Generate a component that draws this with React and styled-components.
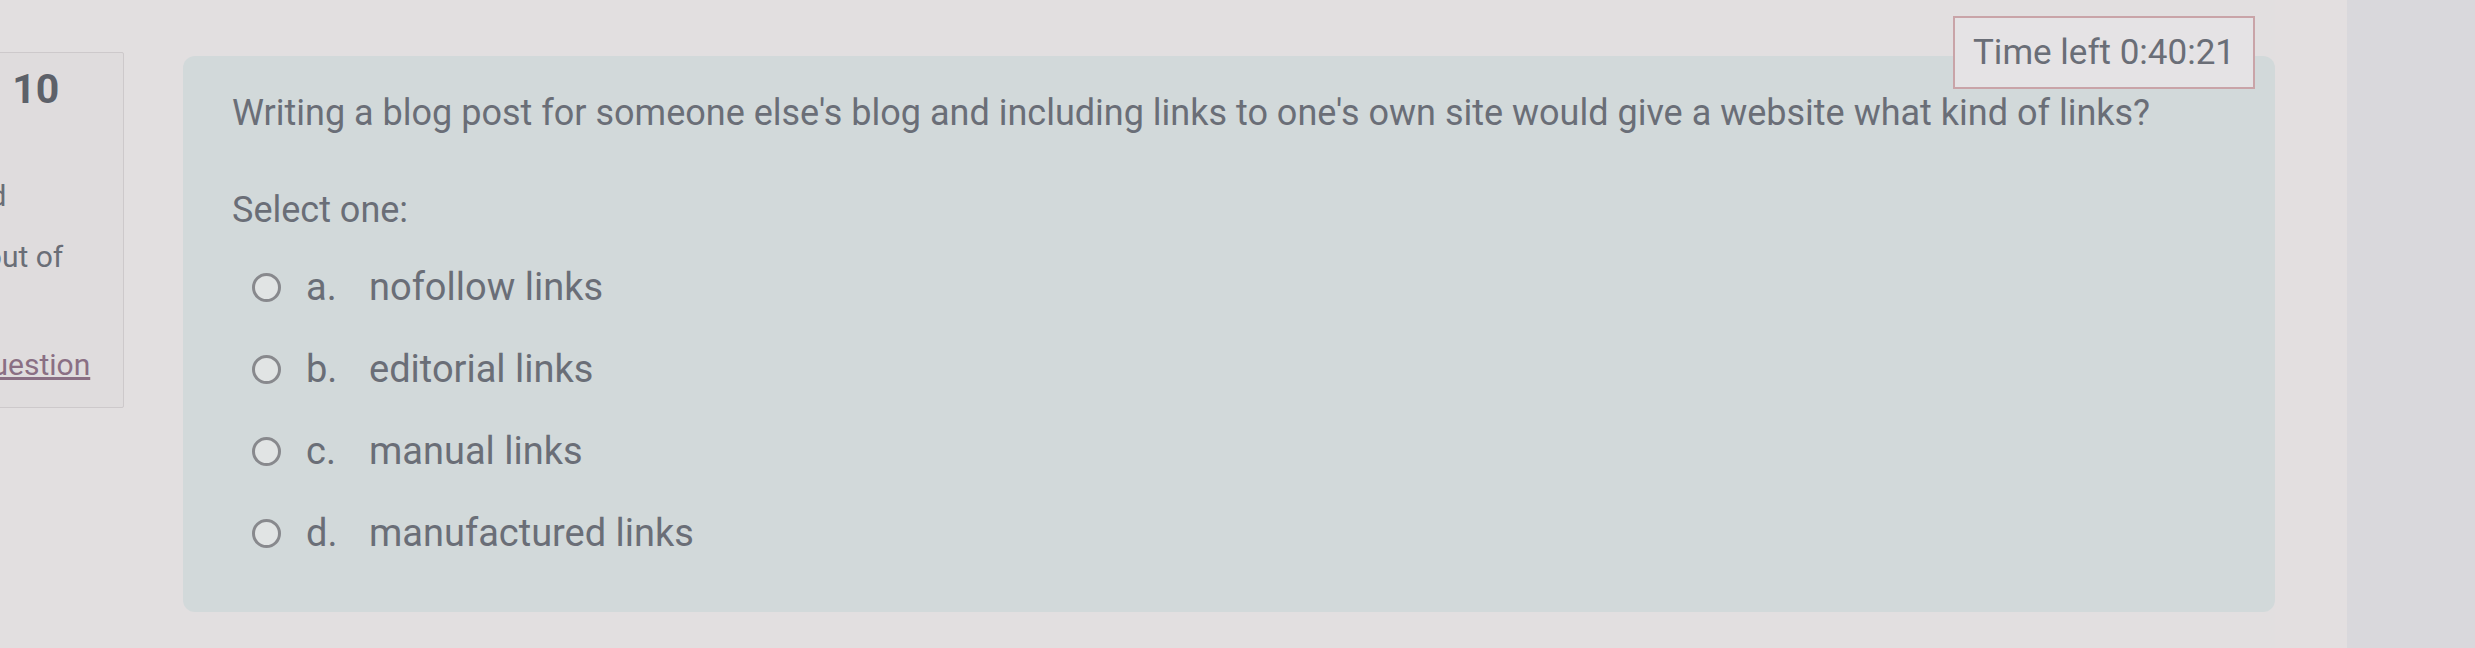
import React from "react";
import styled, { createGlobalStyle } from "styled-components";

const GlobalStyle = createGlobalStyle`
  html, body {
    margin: 0;
    padding: 0;
    overflow: hidden;
    background: #e2dfe0;
    font-family: Roboto, "Liberation Sans", sans-serif;
  }
`;

const Page = styled.div`
  position: relative;
  display: flex;
  width: 2475px;
  height: 648px;
  overflow: hidden;
  background: #e2dfe0;
  color: #6a6e77;
`;

const LeftCol = styled.div`
  width: 183px;
  flex-shrink: 0;
`;

const InfoBox = styled.div`
  box-sizing: border-box;
  margin-left: -134px;
  margin-top: 52px;
  width: 258px;
  height: 356px;
  padding: 12px 48px 0 10px;
  border: 1px solid #cdc9cb;
  border-radius: 2px;
  background: #dfdcdd;
  font-size: 30px;
  line-height: 45px;
`;

const QTitle = styled.div`
  margin-left: -26px;
  font-size: 32px;
  line-height: 48px;
  white-space: nowrap;
  span {
    margin-right: 34px;
  }
  b {
    font-size: 41px;
    font-weight: 700;
    color: #5d6169;
  }
`;

const InfoLine = styled.div`
  margin-top: ${(p) => p.$gap || 0}px;
  margin-left: ${(p) => p.$shift || 0}px;
`;

const FlagLink = styled.a`
  display: flex;
  align-items: center;
  gap: 10px;
  color: #8a6f84;
  text-decoration: underline;
  white-space: nowrap;
`;

const Card = styled.div`
  box-sizing: border-box;
  width: 2092px;
  height: 556px;
  margin-top: 56px;
  padding: 36px 49px;
  flex-shrink: 0;
  border-radius: 12px;
  background: #d2d9da;
`;

const Question = styled.div`
  font-size: 36px;
  line-height: 43px;
  white-space: nowrap;
`;

const Prompt = styled.div`
  margin-top: 54px;
  font-size: 36px;
  line-height: 43px;
`;

const Options = styled.div`
  margin-top: 14px;
  display: flex;
  flex-direction: column;
`;

const Option = styled.label`
  display: flex;
  align-items: center;
  height: 82px;
  padding-left: 20px;
  font-size: 38px;
`;

const Radio = styled.span`
  box-sizing: border-box;
  width: 29px;
  height: 29px;
  margin-right: 25px;
  border: 3px solid #88898d;
  border-radius: 50%;
  background: #e1e4e4;
  flex-shrink: 0;
`;

const Letter = styled.span`
  width: 63px;
  flex-shrink: 0;
`;

const Strip = styled.div`
  flex: 1;
  background: #e3dfe0;
`;

const SidePanel = styled.div`
  width: 128px;
  flex-shrink: 0;
  background: #d9d8dc;
`;

const Timer = styled.div`
  position: absolute;
  top: 16px;
  left: 1953px;
  box-sizing: border-box;
  width: 302px;
  height: 73px;
  display: flex;
  align-items: center;
  justify-content: center;
  border: 2px solid #c9a4a8;
  background: #e5e3e5;
  font-size: 35px;
  color: #6a6e77;
`;

const options = [
  ["a.", "nofollow links"],
  ["b.", "editorial links"],
  ["c.", "manual links"],
  ["d.", "manufactured links"],
];

export default function App() {
  return (
    <>
      <GlobalStyle />
      <Page>
        <LeftCol>
          <InfoBox>
            <QTitle>
              <span>Question</span>
              <b>10</b>
            </QTitle>
            <InfoLine $gap={12}>
              Not yet
              <br />
              answered
            </InfoLine>
            <InfoLine $gap={16}>
              Marked out of
              <br />
              1.00
            </InfoLine>
            <InfoLine $gap={18} $shift={23}>
              <FlagLink>
                <svg width="26" height="28" viewBox="0 0 24 24" fill="none" stroke="#8a6f84" strokeWidth="2">
                  <path d="M5 22V3" />
                  <path d="M5 4h12l-3 4 3 4H5" />
                </svg>
                Flag question
              </FlagLink>
            </InfoLine>
          </InfoBox>
        </LeftCol>
        <Card>
          <Question>
            Writing a blog post for someone else's blog and including links to one's own site would give a website what kind of links?
          </Question>
          <Prompt>Select one:</Prompt>
          <Options>
            {options.map(([letter, text]) => (
              <Option key={letter}>
                <Radio />
                <Letter>{letter}</Letter>
                {text}
              </Option>
            ))}
          </Options>
        </Card>
        <Strip />
        <SidePanel />
        <Timer>Time left 0:40:21</Timer>
      </Page>
    </>
  );
}
